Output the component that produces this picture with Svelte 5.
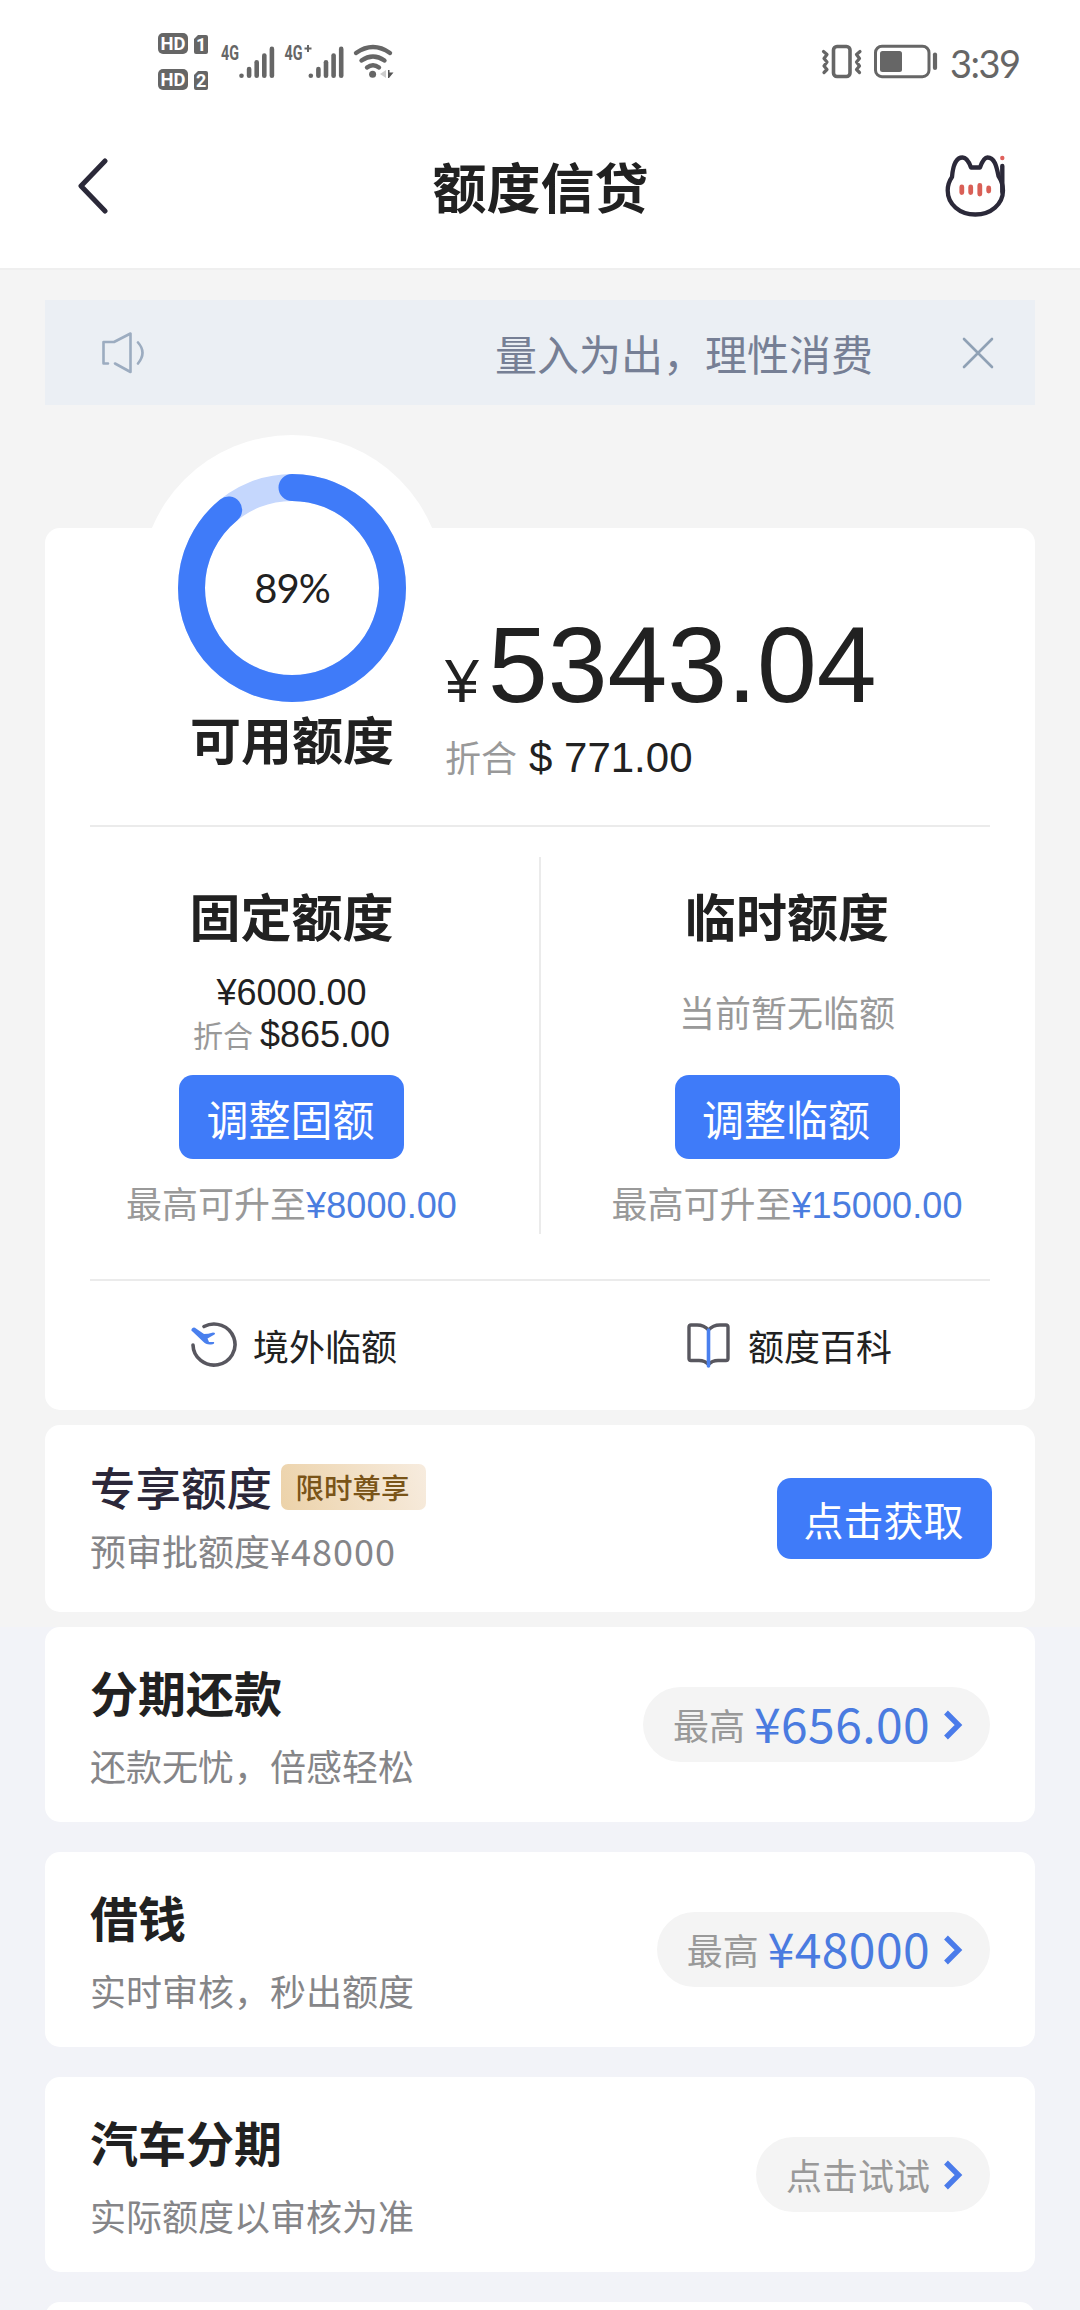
<script lang="ts">
  interface Quota {
    title: string;
    amount?: string;
    usd?: string;
    empty?: string;
    action: string;
    max: string;
  }

  interface Product {
    title: string;
    desc: string;
    label: string;
    amount?: string;
  }

  const percent = 89;
  const ringRadius = 100.5;
  const ringLength = 2 * Math.PI * ringRadius;
  const usedLength = (ringLength * percent) / 100;

  const quotas: Quota[] = [
    { title: '固定额度', amount: '¥6000.00', usd: '$865.00', action: '调整固额', max: '¥8000.00' },
    { title: '临时额度', empty: '当前暂无临额', action: '调整临额', max: '¥15000.00' }
  ];

  const products: Product[] = [
    { title: '分期还款', desc: '还款无忧，倍感轻松', label: '最高', amount: '¥656.00' },
    { title: '借钱', desc: '实时审核，秒出额度', label: '最高', amount: '¥48000' },
    { title: '汽车分期', desc: '实际额度以审核为准', label: '点击试试' }
  ];

  const bars = [0, 1, 2, 3, 4];
</script>

{#snippet signal(x: number)}
  {#each bars as i}
    <line x1={x + i * 7.6} x2={x + i * 7.6} y1={75.7 - i * 6.7} y2="75.8" />
  {/each}
{/snippet}

<div class="page">
  <header>
    <div class="status-bar">
      <svg class="status-left" width="270" height="100" viewBox="140 0 270 100">
        <g fill="#666">
          <rect x="158" y="33" width="30" height="21" rx="5" />
          <rect x="158" y="69" width="30" height="21" rx="5" />
          <path d="M194 39l4-4h8q2 0 2 2v15q0 2-2 2h-10q-2 0-2-2z" />
          <path d="M194 75l4-4h8q2 0 2 2v15q0 2-2 2h-10q-2 0-2-2z" />
        </g>
        <g class="badge-text">
          <text x="160.500" y="50" textLength="25" lengthAdjust="spacingAndGlyphs">HD</text>
          <text x="160.500" y="86" textLength="25" lengthAdjust="spacingAndGlyphs">HD</text>
          <text x="196" y="51">1</text>
          <text x="196" y="87">2</text>
        </g>
        <g class="net-text">
          <text x="221" y="59.500" textLength="18" lengthAdjust="spacingAndGlyphs">4G</text>
          <text x="284.500" y="59.500" textLength="18" lengthAdjust="spacingAndGlyphs">4G</text>
          <path d="M304.500 48.500h7M308 45v7" stroke="#666" stroke-width="2" />
        </g>
        <g stroke="#666" stroke-width="4.600" stroke-linecap="round">
          {@render signal(241.5)}
          {@render signal(310.8)}
        </g>
        <g fill="none" stroke="#666" stroke-width="4.400" stroke-linecap="round">
          <path d="M356 53q17-12 34 0" />
          <path d="M361.500 60.500q11.500-8 23 0" />
          <path d="M367 67.500q6-4.500 12 0" />
        </g>
        <circle cx="372.600" cy="74.300" r="3.500" fill="#666" />
        <path d="M386 70v8l-6-4z" fill="#ccc" />
        <path d="M388 70h1.500v2.500h4l-4.500 5.500h-1z" fill="#555" />
      </svg>
      <svg class="status-right" width="126" height="100" viewBox="816 0 126 100">
        <g fill="none" stroke="#666" stroke-linecap="round" stroke-linejoin="round">
          <rect x="833.500" y="46.500" width="16.500" height="30" rx="3.500" stroke-width="3.600" />
          <path d="M823.500 51.500l3.500 3-3 4 3 3.500-3 4 3 3.500-3 3M860 51.500l-3.500 3 3 4-3 3.500 3 4-3 3.500 3 3" stroke-width="3.200" />
          <rect x="875.500" y="46.200" width="53.500" height="30.500" rx="6.500" stroke-width="3" />
          <path d="M935 54.500v13.500" stroke-width="4.200" />
        </g>
        <rect x="880" y="51" width="22" height="21" rx="2.500" fill="#666" />
      </svg>
      <span class="time">3:39</span>
    </div>
    <div class="nav-bar">
      <svg width="30" height="56" viewBox="0 0 30 56">
        <path d="M27 3L3 28l24 25" fill="none" stroke="#2b2939" stroke-width="5" stroke-linecap="round" stroke-linejoin="round" />
      </svg>
      <h1>额度信贷</h1>
      <svg width="62" height="66" viewBox="944 153 62 66">
        <path
          d="M971 167.500h9C982.500 160.500 984.500 157.500 987.500 157.500C994.500 157.500 996.500 166 998.500 176Q1003 183 1003 190.500C1003 204 991 214.500 975.300 214.500C959.500 214.500 947.700 204 947.700 190.500Q947.700 183 952 177C953 165 956.500 157.500 962.500 157.500C966 157.500 968.500 160.500 971 167.500z"
          fill="none"
          stroke="#2b2939"
          stroke-width="4.300"
          stroke-linejoin="round"
        />
        <path d="M1002.300 166v26" stroke="#2b2939" stroke-width="4.400" stroke-linecap="round" />
        <path d="M961.800 187v5.500M970.700 187v5.500M979.800 185.500v8.500M988.700 188v3" stroke="#d95f56" stroke-width="4.800" stroke-linecap="round" />
        <circle cx="1002.300" cy="158" r="2.200" fill="#e0605c" />
      </svg>
    </div>
  </header>

  <main>
    <div class="notice">
      <svg width="44" height="44" viewBox="0 0 44 44">
        <g fill="none" stroke="#9cacc0" stroke-width="2.600" stroke-linecap="round" stroke-linejoin="round">
          <path d="M7 32.500H2.500V11H13L29.500 2.500v38.500L14 32.500" />
          <path d="M37 11.500q9 10 0 21" />
        </g>
      </svg>
      <span>量入为出，理性消费</span>
      <svg width="32" height="32" viewBox="0 0 32 32">
        <path d="M2 2l28 28M30 2L2 30" stroke="#8fa1b5" stroke-width="2.600" stroke-linecap="round" />
      </svg>
    </div>

    <section class="card quota-card">
      <div class="overview">
        <div class="gauge">
          <div class="gauge-ring">
            <svg width="228" height="228" viewBox="0 0 228 228">
              <g fill="none" stroke-width="27" transform="rotate(-90 114 114)">
                <circle cx="114" cy="114" r={ringRadius} stroke="#c5d7fd" />
                <circle cx="114" cy="114" r={ringRadius} stroke="#3f7bf9" stroke-linecap="round" stroke-dasharray="{usedLength} {ringLength}" />
              </g>
            </svg>
            <span class="percent">{percent}%</span>
          </div>
          <h2>可用额度</h2>
        </div>
        <div class="balance">
          <div class="balance-main"><span class="yen">¥</span>5343.04</div>
          <div class="balance-usd"><span>折合</span>$ 771.00</div>
        </div>
      </div>

      <div class="quotas">
        {#each quotas as quota}
          <div class="quota">
            <h2>{quota.title}</h2>
            {#if quota.amount}
              <div class="quota-amount">
                <div>{quota.amount}</div>
                <div><span>折合</span>{quota.usd}</div>
              </div>
            {:else}
              <div class="quota-empty">{quota.empty}</div>
            {/if}
            <button class="quota-action">{quota.action}</button>
            <div class="quota-max">最高可升至<span>{quota.max}</span></div>
          </div>
        {/each}
      </div>

      <div class="links">
        <a class="link" href="#overseas">
          <svg width="48" height="48" viewBox="0 0 48 48">
            <path d="M14 5.500A21 20.500 0 1 1 3 24" fill="none" stroke="#58575f" stroke-width="3.600" stroke-linecap="round" />
            <path d="M2 7.500q2-2 4 0l8 5.500q4 0 9-1.500 3 0 1.500 2l-7 4 1.500 3.500 5 0q1 2-3 2.500-5 .5-8-3L2.500 10.500q-2-1-.5-3z" fill="#4a80ee" />
          </svg>
          境外临额
        </a>
        <a class="link" href="#wiki">
          <svg width="44" height="48" viewBox="0 0 44 48">
            <path d="M21.500 9C18 5 15 4 10 4H4q-2 0-2 2v31.500q0 2 2 2h8q6 0 9.500 4q3.500-4 9.500-4h8q2 0 2-2V6q0-2-2-2h-6C28 4 25 5 21.500 9z" fill="none" stroke="#58575f" stroke-width="3.400" stroke-linejoin="round" />
            <path d="M21.500 9v36" stroke="#4a80ee" stroke-width="3.600" stroke-linecap="round" />
          </svg>
          额度百科
        </a>
      </div>
    </section>

    <section class="card exclusive">
      <div>
        <div class="exclusive-title">
          <h3>专享额度</h3>
          <span class="tag">限时尊享</span>
        </div>
        <p>预审批额度<span class="preapproved">¥48000</span></p>
      </div>
      <button>点击获取</button>
    </section>

    <div class="products">
      {#each products as product}
        <section class="card product">
          <div>
            <h3>{product.title}</h3>
            <p>{product.desc}</p>
          </div>
          <a class="pill" href="#apply">
            <span>{product.label}</span>
            {#if product.amount}
              <strong>{product.amount}</strong>
            {/if}
            <svg width="20" height="30" viewBox="0 0 20 30">
              <path d="M3 2.500L15.500 15 3 27.500" fill="none" stroke="#4a7bea" stroke-width="5.400" />
            </svg>
          </a>
        </section>
      {/each}
      <section class="card product"></section>
    </div>
  </main>
</div>

<style>
  :global(body) {
    margin: 0;
    background: #f4f4f4;
  }

  .page {
    width: 1080px;
    height: 2310px;
    overflow: hidden;
    background: #f4f4f4;
    color: #212121;
    font-family: 'Noto Sans CJK SC', sans-serif;
  }

  .page * {
    box-sizing: border-box;
  }

  h1,
  h2,
  h3,
  p {
    margin: 0;
  }

  svg {
    display: block;
    flex-shrink: 0;
  }

  a {
    color: inherit;
    text-decoration: none;
  }

  button {
    padding: 0;
    border: 0;
    border-radius: 14px;
    background: #3f7bf9;
    color: #fff;
    font-family: inherit;
  }

  header {
    height: 270px;
    background: #fff;
    border-bottom: 2px solid #efefef;
  }

  .status-bar {
    display: flex;
    height: 100px;
    padding-left: 140px;
  }

  .status-right {
    margin-left: 406px;
  }

  .badge-text {
    fill: #fff;
    font: bold 18px Roboto, sans-serif;
  }

  .net-text {
    fill: #666;
    font: bold 20px Roboto, sans-serif;
  }

  .time {
    margin-left: 8px;
    color: #666;
    font: 38px/126px Lato, sans-serif;
    letter-spacing: -1.5px;
  }

  .nav-bar {
    display: flex;
    align-items: center;
    justify-content: space-between;
    height: 172px;
    padding: 0 74px 0 78px;
  }

  h1 {
    padding-left: 29px;
    font-size: 54px;
    font-weight: 700;
    line-height: 60px;
  }

  main {
    padding-top: 30px;
  }

  .notice {
    display: flex;
    align-items: center;
    height: 105px;
    margin: 0 45px;
    padding: 0 41px 0 56px;
    background: #ebeff4;
    color: #767f95;
    font-size: 42px;
  }

  .notice span {
    margin: 0 89px 0 auto;
  }

  .card {
    margin: 0 45px;
    border-radius: 15px;
    background: #fff;
  }

  .quota-card {
    height: 882px;
    margin-top: 123px;
    padding: 0 45px;
  }

  .overview {
    display: flex;
    height: 299px;
    border-bottom: 2px solid #ebebeb;
  }

  .gauge {
    display: flex;
    flex-direction: column;
    align-items: center;
    width: 304px;
    height: 304px;
    margin: -93px 0 0 50px;
    padding-top: 39px;
    border-radius: 50%;
    background: #fff;
  }

  .gauge-ring {
    display: grid;
    place-items: center;
  }

  .gauge-ring > * {
    grid-area: 1 / 1;
  }

  .percent {
    font: 40px/48px Lato, sans-serif;
    letter-spacing: -1px;
  }

  h2 {
    font-size: 51px;
    font-weight: 700;
    line-height: 73px;
    white-space: nowrap;
  }

  .balance {
    padding: 75px 0 0 1px;
    font-family: 'Liberation Sans', 'Noto Sans CJK SC', sans-serif;
  }

  .balance-main {
    display: flex;
    align-items: baseline;
    height: 125px;
    font-size: 107.5px;
    line-height: 125px;
  }

  .yen {
    margin-right: 9px;
    font-size: 61px;
  }

  .balance-usd {
    display: flex;
    align-items: baseline;
    margin-top: 3px;
    font-size: 42px;
    line-height: 54px;
    white-space: pre;
  }

  .balance-usd span {
    margin-right: 12px;
    color: #999;
    font-size: 36px;
  }

  .quotas {
    display: flex;
    height: 454px;
    padding-top: 30px;
    border-bottom: 2px solid #ebebeb;
  }

  .quota {
    display: flex;
    flex-direction: column;
    align-items: center;
    width: 404px;
    height: 377px;
    padding-top: 22px;
  }

  .quota:first-child {
    width: 451px;
    padding-right: 46px;
    border-right: 2px solid #ebebeb;
  }

  .quota:last-child {
    margin-left: 44px;
  }

  .quota-amount,
  .quota-empty {
    height: 110px;
    margin-top: 13px;
    white-space: nowrap;
  }

  .quota-amount {
    display: flex;
    flex-direction: column;
    align-items: center;
    padding-top: 7px;
    font: 36px/42px 'Liberation Sans', 'Noto Sans CJK SC', sans-serif;
  }

  .quota-amount span {
    margin-right: 7px;
    color: #999;
    font-size: 30px;
  }

  .quota-empty {
    color: #999;
    font-size: 36px;
    line-height: 92px;
  }

  .quota-action {
    width: 225px;
    height: 84px;
    flex-shrink: 0;
    padding-right: 2px;
    font-size: 42px;
    line-height: 83px;
  }

  .quota-max {
    margin-top: 20px;
    color: #999;
    font: 36px/54px 'Liberation Sans', 'Noto Sans CJK SC', sans-serif;
    white-space: nowrap;
  }

  .quota-max span {
    color: #4a7de0;
    letter-spacing: 0.1px;
  }

  .links {
    display: grid;
    grid-template-columns: 1fr 1fr;
    height: 128px;
  }

  .link {
    display: flex;
    align-items: center;
    gap: 15px;
    padding-left: 100px;
    font-size: 36px;
  }

  .link + .link {
    gap: 17px;
    padding-left: 147px;
  }

  .exclusive {
    display: flex;
    justify-content: space-between;
    height: 187px;
    margin-top: 15px;
    padding: 39px 43px 0 45px;
  }

  .exclusive-title {
    display: flex;
    align-items: center;
    gap: 9px;
    height: 46px;
  }

  .exclusive h3 {
    color: #2b2739;
    font-size: 45.5px;
    font-weight: 500;
    line-height: 46px;
    padding-bottom: 3px;
  }

  .tag {
    width: 145px;
    height: 46px;
    padding-right: 2px;
    border-radius: 7px;
    background: linear-gradient(70deg, #ecd2a9, #f7ecdf);
    color: #7a5418;
    font-size: 28.5px;
    font-weight: 500;
    line-height: 45px;
    text-align: center;
  }

  p {
    color: #858588;
    font-size: 36px;
    line-height: 54px;
  }

  .exclusive p {
    margin-top: 13px;
  }

  .preapproved {
    letter-spacing: 1px;
  }

  .exclusive button {
    width: 215px;
    height: 81px;
    margin-top: 14px;
    padding-right: 2px;
    font-size: 40px;
    line-height: 80px;
  }

  .products {
    display: flex;
    flex-direction: column;
    gap: 30px;
    margin-top: 15px;
    background: #f2f3f8;
  }

  .product {
    display: flex;
    align-items: center;
    justify-content: space-between;
    height: 195px;
    padding: 0 45px;
  }

  .product h3 {
    font-size: 48px;
    font-weight: 700;
    line-height: 68px;
  }

  .product p {
    margin-top: 13px;
  }

  .pill {
    display: flex;
    align-items: center;
    height: 75px;
    padding: 0 27px 0 30px;
    border-radius: 38px;
    background: #f4f4f4;
    color: #999;
    font-size: 36px;
    line-height: 54px;
  }

  .pill span {
    padding-bottom: 2px;
  }

  .pill strong {
    margin-left: 9px;
    padding-bottom: 6px;
    color: #4a7be0;
    font-size: 48px;
    font-weight: 400;
    letter-spacing: 0.4px;
  }

  .pill svg {
    margin-left: 13px;
  }
</style>
